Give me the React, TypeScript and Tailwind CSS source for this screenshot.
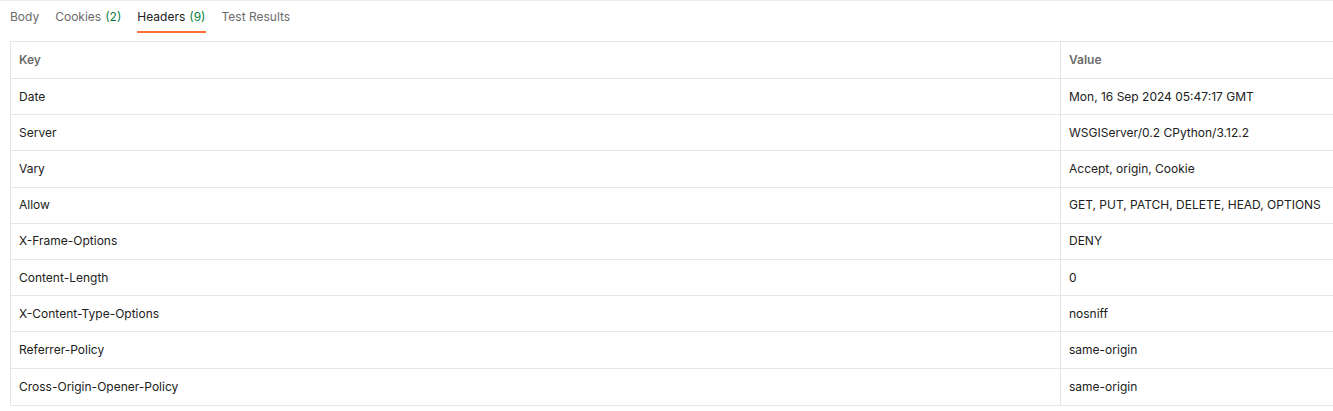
import React from "react";

const headers: { key: string; value: string }[] = [
  { key: "Date", value: "Mon, 16 Sep 2024 05:47:17 GMT" },
  { key: "Server", value: "WSGIServer/0.2 CPython/3.12.2" },
  { key: "Vary", value: "Accept, origin, Cookie" },
  { key: "Allow", value: "GET, PUT, PATCH, DELETE, HEAD, OPTIONS" },
  { key: "X-Frame-Options", value: "DENY" },
  { key: "Content-Length", value: "0" },
  { key: "X-Content-Type-Options", value: "nosniff" },
  { key: "Referrer-Policy", value: "same-origin" },
  { key: "Cross-Origin-Opener-Policy", value: "same-origin" },
];

const tabs = [
  { label: "Body" },
  { label: "Cookies", count: 2 },
  { label: "Headers", count: 9, active: true },
  { label: "Test Results" },
];

export default function App() {
  return (
    <div
      className="w-[1333px] h-[411px] overflow-hidden bg-white border-t border-[#ededed] text-[12px] text-[#212121]"
      style={{ fontFamily: "Inter, 'Noto Sans', sans-serif" }}
    >
      <div className="flex gap-4 px-[10px] h-[32px]">
        {tabs.map((t) => (
          <div
            key={t.label}
            className={
              t.active
                ? "flex items-center border-b-2 border-[#ff6c37] text-[#212121] pt-[1px]"
                : "flex items-center border-b-2 border-transparent text-[#6b6b6b] pt-[1px]"
            }
          >
            <span>{t.label}</span>
            {t.count !== undefined && (
              <span className="ml-1 text-[#0b7f3e]">({t.count})</span>
            )}
          </div>
        ))}
      </div>

      <div className="mt-[8px] ml-[10px] w-[1400px] border border-[#e6e6e6]">
        <div className="flex h-[37px] border-b border-[#e6e6e6] font-semibold text-[#6b6b6b]">
          <div className="w-[1050px] flex items-center pl-2 border-r border-[#e6e6e6]">
            Key
          </div>
          <div className="flex-1 flex items-center pl-2">Value</div>
        </div>
        {headers.map((h) => (
          <div
            key={h.key}
            className="flex h-[36.2px] border-b border-[#e6e6e6] last:border-b-0"
          >
            <div className="w-[1050px] flex items-center pl-2 border-r border-[#e6e6e6]">
              {h.key}
            </div>
            <div className="flex-1 flex items-center pl-2">{h.value}</div>
          </div>
        ))}
      </div>
    </div>
  );
}
